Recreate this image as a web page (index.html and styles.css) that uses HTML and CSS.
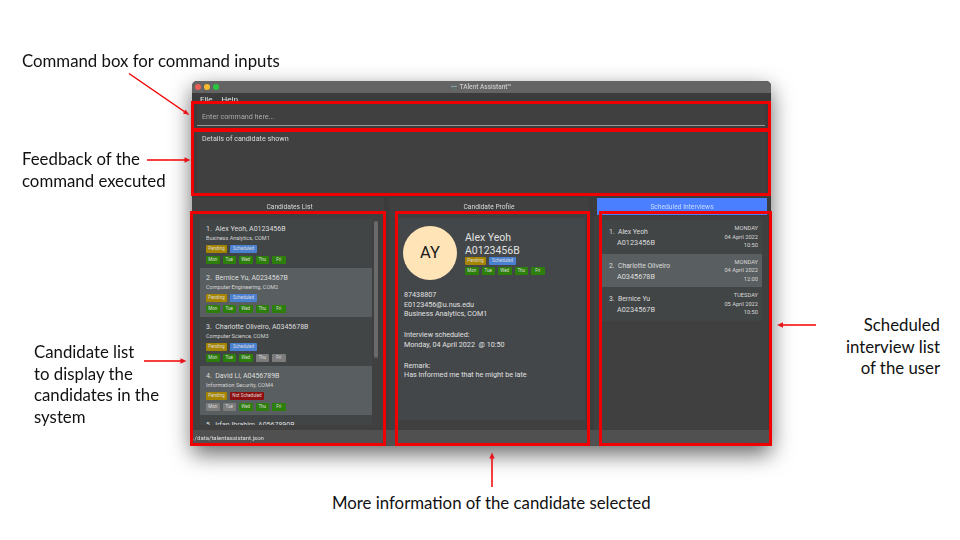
FILE: index.html
```html
<!DOCTYPE html>
<html lang="en">
<head>
<meta charset="utf-8">
<title>TAlent Assistant</title>
<link rel="stylesheet" href="styles.css">
</head>
<body>
<main class="slide">
  <section class="window">
    <header class="titlebar">
      <span class="lights"><i class="light red"></i><i class="light amber"></i><i class="light green"></i></span>
      <span class="title"><svg class="appicon" viewBox="0 0 6 6"><rect width="6" height="6" fill="#5d6b6b"/><rect y="2" width="6" height="1" fill="#8a9a9a"/></svg>TAlent Assistant™</span>
    </header>
    <nav class="menubar"><span>File</span><span>Help</span></nav>
    <div class="command"><span class="placeholder">Enter command here...</span></div>
    <div class="feedback">Details of candidate shown</div>
    <div class="tabs">
      <div class="tab tab-first">Candidates List</div>
      <div class="tab">Candidate Profile</div>
      <div class="tab tab-active">Scheduled Interviews</div>
    </div>
    <div class="panels">
      <div class="panel panel-list">
        <div class="cards">
          <article class="card">
            <div class="cname">1.&nbsp; Alex Yeoh, A0123456B</div>
            <div class="cinfo">Business Analytics, COM1</div>
            <div class="tags"><span class="tag pending">Pending</span><span class="tag sched">Scheduled</span></div>
            <div class="days"><span class="tag on">Mon</span><span class="tag on">Tue</span><span class="tag on">Wed</span><span class="tag on">Thu</span><span class="tag on">Fri</span></div>
          </article>
          <article class="card alt">
            <div class="cname">2.&nbsp; Bernice Yu, A0234567B</div>
            <div class="cinfo">Computer Engineering, COM2</div>
            <div class="tags"><span class="tag pending">Pending</span><span class="tag sched">Scheduled</span></div>
            <div class="days"><span class="tag on">Mon</span><span class="tag on">Tue</span><span class="tag on">Wed</span><span class="tag on">Thu</span><span class="tag on">Fri</span></div>
          </article>
          <article class="card">
            <div class="cname">3.&nbsp; Charlotte Oliveiro, A0345678B</div>
            <div class="cinfo">Computer Science, COM3</div>
            <div class="tags"><span class="tag pending">Pending</span><span class="tag sched">Scheduled</span></div>
            <div class="days"><span class="tag on">Mon</span><span class="tag on">Tue</span><span class="tag on">Wed</span><span class="tag off">Thu</span><span class="tag off">Fri</span></div>
          </article>
          <article class="card alt">
            <div class="cname">4.&nbsp; David Li, A0456789B</div>
            <div class="cinfo">Information Security, COM4</div>
            <div class="tags"><span class="tag pending">Pending</span><span class="tag unsched">Not Scheduled</span></div>
            <div class="days"><span class="tag off">Mon</span><span class="tag off">Tue</span><span class="tag on">Wed</span><span class="tag on">Thu</span><span class="tag on">Fri</span></div>
          </article>
          <article class="card">
            <div class="cname">5.&nbsp; Irfan Ibrahim, A0567890B</div>
          </article>
        </div>
        <div class="scrollbar"></div>
      </div>
      <div class="panel panel-profile">
        <div class="profile">
          <div class="profile-head">
            <div class="avatar">AY</div>
            <div class="profile-id">
              <div class="pname">Alex Yeoh</div>
              <div class="pname">A0123456B</div>
              <div class="tags"><span class="tag pending">Pending</span><span class="tag sched">Scheduled</span></div>
              <div class="days"><span class="tag on">Mon</span><span class="tag on">Tue</span><span class="tag on">Wed</span><span class="tag on">Thu</span><span class="tag on">Fri</span></div>
            </div>
          </div>
          <p class="pblock">87438807<br>E0123456@u.nus.edu<br>Business Analytics, COM1</p>
          <p class="pblock">Interview scheduled:<br>Monday, 04 April 2022&nbsp; @ 10:50</p>
          <p class="pblock">Remark:<br>Has informed me that he might be late</p>
        </div>
      </div>
      <div class="panel panel-interviews">
        <div class="icards">
          <article class="icard">
            <div class="iwho"><div>1.&nbsp; Alex Yeoh</div><div class="iid">A0123456B</div></div>
            <div class="iwhen"><div>MONDAY</div><div>04 April 2022</div><div>10:50</div></div>
          </article>
          <article class="icard alt">
            <div class="iwho"><div>2.&nbsp; Charlotte Oliveiro</div><div class="iid">A0345678B</div></div>
            <div class="iwhen"><div>MONDAY</div><div>04 April 2022</div><div>12:00</div></div>
          </article>
          <article class="icard">
            <div class="iwho"><div>3.&nbsp; Bernice Yu</div><div class="iid">A0234567B</div></div>
            <div class="iwhen"><div>TUESDAY</div><div>05 April 2022</div><div>10:50</div></div>
          </article>
        </div>
      </div>
    </div>
    <footer class="statusbar">./data/talentassistant.json</footer>
  </section>

  <div class="box box-command"></div>
  <div class="box box-feedback"></div>
  <div class="box box-list"></div>
  <div class="box box-profile"></div>
  <div class="box box-interviews"></div>

  <p class="note note-command">Command box for command inputs</p>
  <p class="note note-feedback">Feedback of the<br>command executed</p>
  <p class="note note-list">Candidate list<br>to display the<br>candidates in the<br>system</p>
  <p class="note note-interviews">Scheduled<br>interview list<br>of the user</p>
  <p class="note note-profile">More information of the candidate selected</p>

  <svg class="arrows" viewBox="0 0 960 540" aria-hidden="true">
    <g stroke="#f00000" stroke-width="1.5" fill="none">
      <path d="M129 73.500 L185 112"/>
      <path d="M147 160 L186 160"/>
      <path d="M144 361 L182 361"/>
      <path d="M816 325 L781 325"/>
      <path d="M492 487 L492 457"/>
    </g>
    <g fill="#e8141c">
      <path d="M189.500 115 L183 113.500 L185.500 109.500 Z"/>
      <path d="M190.500 160 L184.500 157.300 L184.500 162.700 Z"/>
      <path d="M186.500 361 L180.500 358.300 L180.500 363.700 Z"/>
      <path d="M777 325 L783 322.300 L783 327.700 Z"/>
      <path d="M492 452.500 L489.300 458.500 L494.700 458.500 Z"/>
    </g>
  </svg>
</main>
</body>
</html>
```
FILE: styles.css
```css
* { box-sizing: border-box; }
html, body { margin: 0; padding: 0; background: #fff; }
.slide {
  position: relative;
  width: 960px;
  height: 540px;
  overflow: hidden;
  background: #fff;
  font-family: "Roboto", "Liberation Sans", sans-serif;
}

/* window */
.window {
  position: absolute;
  left: 192px;
  top: 81px;
  width: 579px;
  height: 365px;
  display: flex;
  flex-direction: column;
  background: #3c3c3c;
  border-radius: 5px 5px 0 0;
  box-shadow: 0 8px 22px rgba(0,0,0,.6);
  color: #dcdcdc;
  overflow: hidden;
  filter: blur(.35px);
}
.titlebar {
  height: 12px;
  flex: none;
  position: relative;
  display: flex;
  align-items: center;
  justify-content: center;
  background: #646464;
}
.lights { position: absolute; left: 3px; top: 3px; display: flex; gap: 3px; }
.light { width: 6px; height: 6px; border-radius: 50%; display: block; }
.red { background: #ee5f57; }
.amber { background: #f5bd2f; }
.green { background: #27c840; }
.title { font-size: 6.500px; color: #c8c8c8; font-weight: 500; display: flex; align-items: center; gap: 2px; }
.appicon { width: 6px; height: 6px; }
.menubar {
  height: 10px;
  flex: none;
  display: flex;
  gap: 9px;
  padding: 2px 0 0 8px;
  font-size: 8px;
  line-height: 9px;
  background: #3c3c3c;
  color: #e4e4e4;
}
.command {
  height: 23px;
  flex: none;
  margin: 0 6px 0 5px;
  padding: 9px 5px 0;
  border-bottom: 1px solid #9a9a9a;
  background: #404040;
  font-size: 7.200px;
  line-height: 10px;
  color: #aaa;
}
.feedback {
  height: 64px;
  flex: none;
  margin: 5px 5px 0;
  padding: 2px 5px;
  background: #404040;
  font-size: 7.200px;
  line-height: 12px;
  color: #dcdcdc;
}
.tabs {
  height: 18px;
  flex: none;
  margin-top: 3px;
  display: grid;
  grid-template-columns: 197px 205px 1fr;
  background: #3c3c3c;
}
.tab { font-size: 6.700px; line-height: 18px; text-align: center; color: #d8d8d8; background: #404040; margin-right: 5px; }
.tab-first { padding-left: 3px; }
.tab-active { background: #4a80ff; color: #c6d8ff; margin: 0 4px 0 3px; height: 17px; }
.panels { flex: 1; min-height: 0; display: grid; grid-template-columns: 197px 205px 1fr; background: #3c3c3c; overflow: hidden; }
.panel { position: relative; overflow: hidden; }
.panel-list { background: #404040; margin-right: 5px; }
.cards { margin: 3px 0 0 8px; width: 172px; height: 206px; overflow: hidden; }
.card { height: 49px; padding: 5px 6px 0; background: #414546; }
.card.alt { background: #595e60; }
.cname { font-size: 7px; line-height: 10px; color: #dedede; }
.cinfo { font-size: 5.500px; line-height: 8px; color: #d4d4d4; }
.tags, .days { display: flex; gap: 3px; }
.tags { margin-top: 3px; }
.days { margin-top: 3px; }
.tag { font-size: 4.500px; line-height: 8px; border-radius: 1px; color: #ddd; height: 8px; display: block; white-space: nowrap; text-align: center; }
.days .tag { width: 13.500px; }
.pending { background: #a58400; width: 21px; }
.sched { background: #4a80d0; width: 27px; }
.unsched { background: #8e0f0f; width: 34px; }
.on { background: #2d7f0c; }
.off { background: #7c7c7c; }
.scrollbar { position: absolute; left: 182px; top: 5px; width: 4px; height: 137px; border-radius: 2px; background: #6a6a6a; }

.panel-profile { background: #404040; margin-right: 8px; }
.profile { height: 202px; margin: 2px 0 0 8px; padding: 8px 0 0 6px; width: 188px; background: #43474a; }
.profile-head { display: flex; gap: 8px; align-items: flex-start; margin: 0 0 10px 0; }
.avatar { width: 54px; height: 54px; border-radius: 50%; background: #ffe4b8; color: #1a1a1a; font-size: 16.500px; text-align: center; line-height: 54px; flex: none; }
.profile-id { padding-top: 4.500px; }
.profile-id .tags { margin-top: 0; }
.profile-id .days { margin-top: 2px; }
.pname { font-size: 10.500px; line-height: 13px; color: #e2e2e2; }
.pblock { margin: 0 0 11px 1px; font-size: 7.200px; line-height: 9.700px; color: #e0e0e0; }

.panel-interviews { background: #404040; margin-right: 3px; }
.icards { margin: 4px 0 0 8px; width: 160px; }
.icard { height: 33.700px; display: flex; justify-content: space-between; padding: 4px 4px 0 7px; background: #414546; }
.icard.alt { background: #595e60; }
.iwho { font-size: 6.800px; line-height: 10px; color: #dedede; padding-top: 3px; }
.iid { margin: 1px 0 0 8px; font-size: 7.300px; }
.iwhen { font-size: 5.700px; line-height: 8.500px; text-align: right; color: #d8d8d8; }

.statusbar { height: 16px; flex: none; background: #505050; font-size: 6px; line-height: 15px; padding-left: 1px; color: #e0e0e0; }

/* annotation overlay */
.box { position: absolute; border: 3px solid #f00000; }
.box-command { left: 191px; top: 101px; width: 580px; height: 30px; }
.box-feedback { left: 191px; top: 129px; width: 580px; height: 67px; }
.box-list { left: 190px; top: 211px; width: 196px; height: 235px; }
.box-profile { left: 395px; top: 211px; width: 195px; height: 235px; }
.box-interviews { left: 599px; top: 211px; width: 173px; height: 235px; }

.note { position: absolute; margin: 0; font-family: "Lato", "Open Sans", sans-serif; font-size: 16.800px; line-height: 21.500px; color: #111; }
.note-command { left: 22px; top: 50px; white-space: nowrap; }
.note-feedback { left: 22px; top: 148px; }
.note-list { left: 34px; top: 341px; }
.note-interviews { right: 20px; top: 314px; text-align: right; }
.note-profile { left: 332px; top: 492px; white-space: nowrap; }
.arrows { position: absolute; left: 0; top: 0; width: 960px; height: 540px; pointer-events: none; }
```
